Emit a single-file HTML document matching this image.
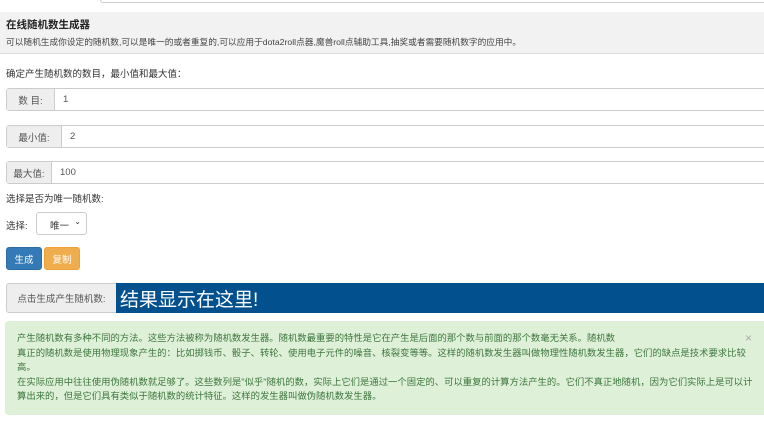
<!DOCTYPE html>
<html><head><meta charset="utf-8"><style>
*{box-sizing:border-box;margin:0;padding:0}
body{width:764px;height:430px;overflow:hidden;background:#fff;font-family:"Liberation Sans","Noto Sans CJK SC",sans-serif;color:#333;position:relative}
.abs{position:absolute}
.topin{left:100px;top:-10px;width:680px;height:13px;border:1px solid #ccc;border-radius:3px}
.hdr{left:0;top:12px;width:764px;height:42px;background:#f2f2f2;border-bottom:1px solid #ddd}
.t{left:6px;top:17px;font-size:10.5px;font-weight:bold;color:#222}
.st{left:6px;top:35px;font-size:8.7px;color:#444;white-space:nowrap}
.p{font-size:9.5px;color:#333;white-space:nowrap}
.ig{left:6px;width:770px;height:23px;border:1px solid #ccc;border-radius:3px;display:flex;font-size:9.5px}
.ig .l{background:#eee;border-right:1px solid #ccc;display:flex;align-items:center;justify-content:center;color:#555}
.ig .v{padding-left:8px;display:flex;align-items:center;color:#555}
.sel{left:36px;top:212px;width:51px;height:23px;border:1px solid #ccc;border-radius:3px;font-size:9.5px;padding:5px 0 0 13px}
.btn{top:247px;height:23px;border-radius:3px;color:#fff;font-size:9.5px;display:flex;align-items:center;justify-content:center}
.alert{left:5px;top:321px;width:770px;height:94px;background:#dff0d8;border-radius:3px;color:#3c763d;font-size:9.35px;padding:10px 0 0 12px;line-height:14.5px}
</style></head><body>
<div class="abs topin"></div>
<div class="abs hdr"></div>
<div class="abs t">在线随机数生成器</div>
<div class="abs st">可以随机生成你设定的随机数,可以是唯一的或者重复的,可以应用于dota2roll点器,魔兽roll点辅助工具,抽奖或者需要随机数字的应用中。</div>
<div class="abs p" style="left:6px;top:66px">确定产生随机数的数目，最小值和最大值：</div>
<div class="abs ig" style="top:88px"><div class="l" style="width:48px">数 目:</div><div class="v">1</div></div>
<div class="abs ig" style="top:125px"><div class="l" style="width:55px">最小值:</div><div class="v">2</div></div>
<div class="abs ig" style="top:161px"><div class="l" style="width:45px">最大值:</div><div class="v">100</div></div>
<div class="abs p" style="left:6px;top:191px">选择是否为唯一随机数:</div>
<div class="abs p" style="left:6px;top:218px">选择:</div>
<div class="abs sel">唯一 <span style="position:absolute;right:5px;top:4px;font-size:8px">&#8964;</span></div>
<div class="abs btn" style="left:6px;width:36px;background:#337ab7;border:1px solid #2e6da4">生成</div>
<div class="abs btn" style="left:44px;width:36px;background:#f0ad4e;border:1px solid #eea236">复制</div>
<div class="abs" style="left:6px;top:283px;width:111px;height:30px;background:#eee;border:1px solid #ccc;border-radius:3px 0 0 3px;font-size:9.5px;color:#555;display:flex;align-items:center;justify-content:center">点击生成产生随机数:</div>
<div class="abs" style="left:116px;top:283px;width:660px;height:30px;background:#03508f;color:#fff;font-size:19px;padding:2px 0 0 4px">结果显示在这里!</div>
<div class="abs alert">
<div>产生随机数有多种不同的方法。这些方法被称为随机数发生器。随机数最重要的特性是它在产生是后面的那个数与前面的那个数毫无关系。随机数</div>
<div>真正的随机数是使用物理现象产生的：比如掷钱币、骰子、转轮、使用电子元件的噪音、核裂变等等。这样的随机数发生器叫做物理性随机数发生器，它们的缺点是技术要求比较<br>高。</div>
<div>在实际应用中往往使用伪随机数就足够了。这些数列是"似乎"随机的数，实际上它们是通过一个固定的、可以重复的计算方法产生的。它们不真正地随机，因为它们实际上是可以计<br>算出来的，但是它们具有类似于随机数的统计特征。这样的发生器叫做伪随机数发生器。</div>
<span style="position:absolute;left:740px;top:10px;color:#aaa;font-size:12px">×</span>
</div>
</body></html>
